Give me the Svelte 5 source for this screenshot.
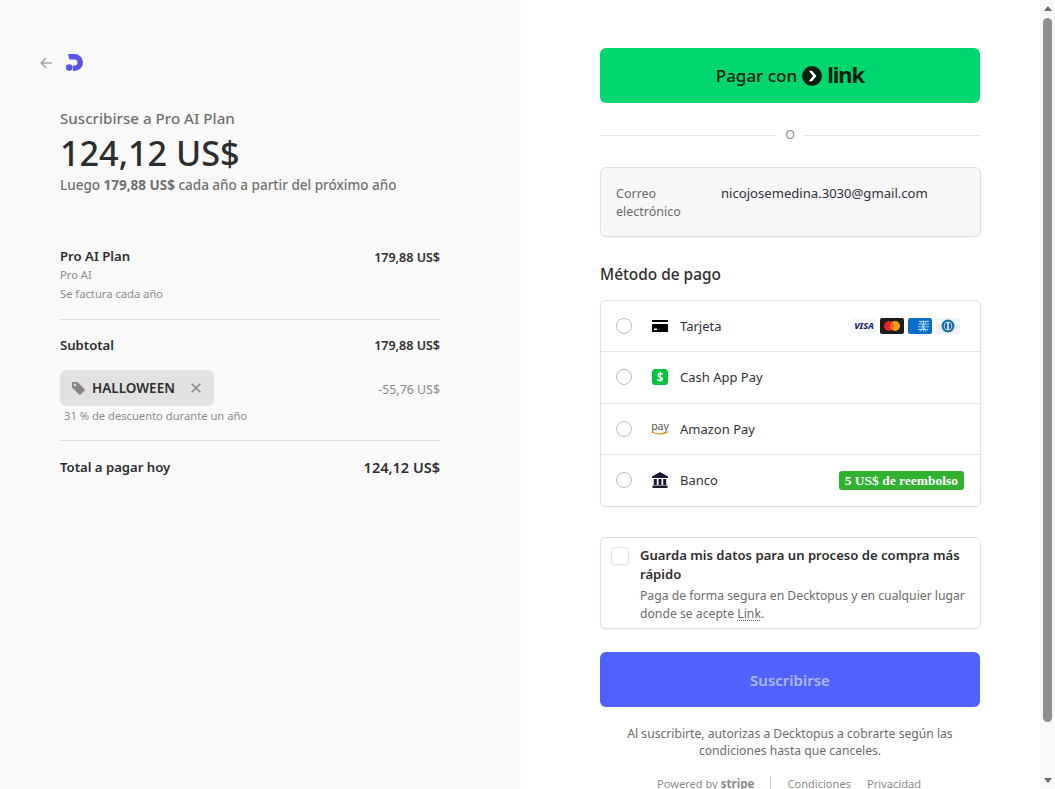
<script>
	const lines = [
		{ label: 'Tarjeta', icon: 'card' },
		{ label: 'Cash App Pay', icon: 'cash' },
		{ label: 'Amazon Pay', icon: 'amazon' },
		{ label: 'Banco', icon: 'bank' }
	];
</script>

<div class="page">
	<section class="summary">
		<div class="top">
			<svg class="back" width="12" height="12" viewBox="0 0 12 12" fill="none" stroke="#a3a3a3" stroke-width="1.5">
				<path d="M12 6H1.500M6 1.200 1.200 6 6 10.800" />
			</svg>
			<svg width="17" height="17" viewBox="0 0 17 17" fill="#5a55e8">
				<path d="M2 0h6.500a8.500 8.500 0 0 1 0 17H7v-5.500h1.500a3 3 0 0 0 0-6H3.400z" />
				<circle cx="3.300" cy="13.600" r="3.300" />
			</svg>
		</div>

		<div class="head">
			<div class="subtitle">Suscribirse a Pro AI Plan</div>
			<div class="price">124,12 US$</div>
			<div class="then">Luego <b>179,88 US$</b> cada año a partir del próximo año</div>
		</div>

		<div class="item">
			<div>
				<div class="strong name">Pro AI Plan</div>
				<div class="small">Pro AI</div>
				<div class="small">Se factura cada año</div>
			</div>
			<div class="amount">179,88 US$</div>
		</div>

		<div class="subtotal">
			<div class="row">
				<span class="strong">Subtotal</span>
				<span class="amount">179,88 US$</span>
			</div>
			<div class="row promo-row">
				<div class="promo">
					<svg width="13" height="13" viewBox="0 0 13 13" fill="#868686">
						<path d="M0 1.200C0 .5.500 0 1.200 0h4.300l7 7c.5.500.5 1.200 0 1.700l-3.800 3.800c-.5.500-1.200.5-1.700 0l-7-7zM3 4.300a1.300 1.300 0 1 0 0-2.600 1.300 1.300 0 0 0 0 2.600z" />
					</svg>
					<span>HALLOWEEN</span>
					<svg class="close" width="10" height="10" viewBox="0 0 10 10" stroke="#8a8a8a" stroke-width="1.600">
						<path d="M.7.7l8.600 8.600M9.300.7.700 9.300" />
					</svg>
				</div>
				<span class="discount">-55,76 US$</span>
			</div>
			<div class="small note">31 % de descuento durante un año</div>
		</div>

		<div class="row total">
			<span class="strong">Total a pagar hoy</span>
			<span class="total-amount">124,12 US$</span>
		</div>
	</section>

	<section class="checkout">
		<button class="link-btn">
			<span>Pagar con</span>
			<svg width="20" height="20" viewBox="0 0 20 20">
				<circle cx="10" cy="10" r="10" fill="#011e0f" />
				<path d="M6.800 4.800h3.200L14.500 10 10 15.200H6.800L11 10z" fill="#fff" />
			</svg>
			<span class="link-word">link</span>
		</button>

		<div class="or"><span>O</span></div>

		<div class="email">
			<div class="email-label">Correo electrónico</div>
			<div class="email-value">nicojosemedina.3030@gmail.com</div>
		</div>

		<h2>Método de pago</h2>

		<div class="methods">
			{#each lines as line}
				<div class="method">
					<span class="radio"></span>
					<span class="method-icon">
						{#if line.icon === 'card'}
							<svg width="16" height="12" viewBox="0 0 16 12">
								<rect width="16" height="2" fill="#000" />
								<path d="M0 4h16v8H0z" fill="#000" />
								<rect x="2" y="8.500" width="3" height="1.500" fill="#fff" />
							</svg>
						{:else if line.icon === 'cash'}
							<svg width="16" height="16" viewBox="0 0 16 16">
								<rect width="16" height="16" rx="3.500" fill="#00c43c" />
								<path d="M10.800 5.300C9.300 4 6 4.200 6 6.200 6 8.400 10.400 7.500 10.400 9.800 10.400 12 6.800 12 5.200 10.500M8.300 3v10" fill="none" stroke="#fff" stroke-width="1.500" />
							</svg>
						{:else if line.icon === 'amazon'}
							<span class="amazon">
								<span>pay</span>
								<svg width="18" height="4" viewBox="0 0 18 4">
									<path d="M.5.800C5 3.800 13 3.800 17.500.8" fill="none" stroke="#f39c26" stroke-width="1.200" />
								</svg>
							</span>
						{:else}
							<svg width="16" height="16" viewBox="0 0 16 16" fill="#1a1a35">
								<path d="M8 0l8 4.500V6H0V4.500z" />
								<path d="M1.800 7h3v6h-3zM6.500 7h3v6h-3zM11.200 7h3v6h-3zM.5 13.600h15V16H.5z" />
							</svg>
						{/if}
					</span>
					<span class="method-label">{line.label}</span>

					{#if line.icon === 'card'}
						<span class="brands">
							<span class="brand visa">VISA</span>
							<span class="brand mc">
								<svg width="24" height="16" viewBox="0 0 24 16">
									<rect width="24" height="16" rx="2" fill="#1c1c1c" />
									<circle cx="9" cy="8" r="5" fill="#e8202a" />
									<circle cx="15" cy="8" r="5" fill="#f79e1b" />
									<path d="M12 4a5 5 0 0 1 0 8 5 5 0 0 1 0-8z" fill="#f26a1f" />
								</svg>
							</span>
							<span class="brand amex">
								<svg width="24" height="16" viewBox="0 0 24 16">
									<rect width="24" height="16" rx="2" fill="#0a6fc9" />
									<path d="M11 3.500h10M10 6.200h11M10 8.800h11M10 11.500h10M12 2.500l6 11M19 2.500l-7 11M15.500 2.500v11" fill="none" stroke="#a9d0ef" stroke-width="1" />
								</svg>
							</span>
							<span class="brand diners">
								<svg width="24" height="16" viewBox="0 0 24 16">
									<rect width="24" height="16" rx="2" fill="#eef3f8" />
									<circle cx="12" cy="8" r="6.500" fill="#1a6ea8" />
									<circle cx="12" cy="8" r="4.200" fill="#fff" />
									<path d="M11.300 4.400a3.700 3.700 0 0 0 0 7.200zM12.700 4.400a3.700 3.700 0 0 1 0 7.200z" fill="#1a6ea8" />
								</svg>
							</span>
						</span>
					{:else if line.icon === 'bank'}
						<span class="cashback">5 US$ de reembolso</span>
					{/if}
				</div>
			{/each}
		</div>

		<div class="save">
			<span class="check"></span>
			<div>
				<div class="save-title">Guarda mis datos para un proceso de compra más rápido</div>
				<div class="save-text">Paga de forma segura en Decktopus y en cualquier lugar donde se acepte <span class="dotted">Link</span>.</div>
			</div>
		</div>

		<button class="pay-btn">Suscribirse</button>

		<p class="terms">Al suscribirte, autorizas a Decktopus a cobrarte según las condiciones hasta que canceles.</p>

		<div class="foot">
			<span>Powered by <b>stripe</b></span>
			<span class="sep"></span>
			<span class="foot-links"><span>Condiciones</span><span>Privacidad</span></span>
		</div>
	</section>

	<div class="scrollbar">
		<span class="arrow up"></span>
		<span class="thumb"></span>
		<span class="arrow down"></span>
	</div>
</div>

<style>
	:global(body) {
		margin: 0;
		font-family: "Noto Sans", "Open Sans", Arial, sans-serif;
		color: #1a1a1a;
		background: #fff;
		overflow: hidden;
	}
	* {
		box-sizing: border-box;
	}
	.page {
		position: relative;
		display: flex;
		height: 789px;
		overflow: hidden;
	}
	.summary {
		width: 520px;
		flex: none;
		background: #f9f9f9;
		padding: 54px 80px 0 60px;
		box-shadow: 4px 0 12px rgba(0, 0, 0, 0.02);
	}
	.top {
		display: flex;
		align-items: center;
		gap: 14px;
		margin-left: -20px;
	}
	.head {
		margin-top: 37px;
	}
	.subtitle {
		font-size: 15.150px;
		line-height: 20px;
		font-weight: 500;
		color: #707070;
	}
	.price {
		font-size: 34.200px;
		line-height: 48px;
		font-weight: 500;
		color: #2d2d2d;
		margin-top: 1px;
	}
	.then {
		font-size: 13.500px;
		line-height: 18px;
		font-weight: 500;
		color: #707070;
		margin-top: -1px;
	}
	.then b {
		font-weight: 700;
	}
	.item {
		display: flex;
		justify-content: space-between;
		margin-top: 54px;
		padding-bottom: 16px;
		border-bottom: 1px solid #e0e0e0;
	}
	.strong {
		font-size: 13.150px;
		line-height: 19px;
		font-weight: 600;
		color: #2d2d2d;
	}
	.name {
		line-height: 17px;
	}
	.small {
		font-size: 11.200px;
		line-height: 19px;
		color: #8c8c8c;
	}
	.amount {
		font-size: 12.500px;
		line-height: 19px;
		font-weight: 600;
		color: #2d2d2d;
	}
	.row {
		display: flex;
		justify-content: space-between;
		align-items: center;
	}
	.subtotal {
		padding: 16px 0 15px;
		border-bottom: 1px solid #e0e0e0;
	}
	.promo-row {
		margin-top: 15px;
	}
	.promo {
		display: flex;
		align-items: center;
		height: 36px;
		width: 154px;
		padding-left: 12px;
		border-radius: 6px;
		background: #e2e2e2;
		font-size: 13.500px;
		font-weight: 600;
		color: #2d2d2d;
		gap: 7px;
	}
	.close {
		margin-left: 9px;
	}
	.discount {
		font-size: 12.400px;
		color: #8c8c8c;
		margin-top: 2px;
	}
	.note {
		margin: 0 0 0 4px;
	}
	.total {
		margin-top: 16px;
	}
	.total-amount {
		font-size: 14.500px;
		font-weight: 600;
		color: #2d2d2d;
	}
	.checkout {
		width: 380px;
		margin: 48px 0 0 80px;
		flex: none;
	}
	button {
		display: flex;
		align-items: center;
		justify-content: center;
		width: 100%;
		height: 55px;
		border: 0;
		border-radius: 6px;
		font-family: inherit;
	}
	.link-btn {
		background: #00d66f;
		color: #011e0f;
		font-size: 17px;
		font-weight: 500;
		gap: 5px;
	}
	.link-word {
		font-size: 22px;
		line-height: 26px;
		font-weight: 700;
		letter-spacing: -1px;
		margin-top: -3px;
	}
	.or {
		display: flex;
		align-items: center;
		gap: 9px;
		margin-top: 23px;
		font-size: 12.500px;
		line-height: 18px;
		color: #8c8c8c;
	}
	.or::before,
	.or::after {
		content: '';
		flex: 1;
		height: 1px;
		background: #e6e6e6;
	}
	.email {
		display: flex;
		width: 381px;
		height: 70px;
		margin-top: 23px;
		padding: 17px 15px;
		background: #f7f7f7;
		border: 1px solid #e0e0e0;
		border-radius: 6px;
		box-shadow: 0 1px 2px rgba(0, 0, 0, 0.05);
		font-size: 13.100px;
		line-height: 18px;
	}
	.email-label {
		width: 105px;
		flex: none;
		font-size: 12.500px;
		color: #6b6b6b;
	}
	.email-value {
		color: #30313d;
		margin-top: -1px;
	}
	h2 {
		margin: 28px 0 0;
		font-size: 15.400px;
		line-height: 20px;
		font-weight: 500;
		color: #2d2d2d;
	}
	.methods {
		width: 381px;
		margin-top: 15px;
		border: 1px solid #e0e0e0;
		border-radius: 6px;
		box-shadow: 0 1px 2px rgba(0, 0, 0, 0.05);
	}
	.method {
		display: flex;
		align-items: center;
		height: 51.250px;
		padding: 0 16px 0 15px;
		border-bottom: 1px solid #e6e6e6;
		font-size: 13px;
	}
	.method:last-child {
		border-bottom: 0;
	}
	.radio {
		width: 16px;
		height: 16px;
		flex: none;
		border-radius: 50%;
		border: 1px solid #bdbdbd;
	}
	.method-icon {
		display: flex;
		justify-content: center;
		align-items: center;
		width: 18px;
		margin: 0 11px 0 19px;
		flex: none;
	}
	.method-label {
		color: #30313d;
	}
	.amazon {
		display: flex;
		flex-direction: column;
		align-items: center;
		font-size: 10.500px;
		line-height: 9px;
		color: #555;
	}
	.brands {
		display: flex;
		gap: 4px;
		margin-left: auto;
		margin-right: 4px;
	}
	.brand {
		display: block;
		width: 24px;
		height: 16px;
	}
	.brand svg {
		display: block;
	}
	.visa {
		font-size: 9px;
		line-height: 16px;
		font-weight: 800;
		font-style: italic;
		color: #1a2a7a;
		text-align: center;
		background: #f6f8fb;
		border-radius: 2px;
	}
	.cashback {
		margin-left: auto;
		height: 19px;
		padding: 0 6px;
		border-radius: 3px;
		background: #30b130;
		color: #fff;
		font-family: "Liberation Serif", serif;
		font-size: 13.500px;
		line-height: 19px;
		font-weight: 700;
	}
	.save {
		display: flex;
		gap: 11px;
		width: 381px;
		height: 92px;
		margin-top: 30px;
		padding: 9px 10px;
		border: 1px solid #e0e0e0;
		border-radius: 6px;
		box-shadow: 0 1px 2px rgba(0, 0, 0, 0.05);
	}
	.check {
		width: 18px;
		height: 18px;
		flex: none;
		border: 1px solid #e0e0e0;
		border-radius: 4px;
		box-shadow: 0 1px 2px rgba(0, 0, 0, 0.06);
	}
	.save-title {
		font-size: 13.100px;
		line-height: 19px;
		font-weight: 600;
		color: #2d2d2d;
		margin-top: -1px;
	}
	.save-text {
		font-size: 12.200px;
		line-height: 18px;
		color: #6b6b6b;
		margin-top: 3px;
	}
	.dotted {
		text-decoration: underline dotted;
		text-underline-offset: 2px;
	}
	.pay-btn {
		margin-top: 23px;
		background: #4f62fb;
		color: rgba(255, 255, 255, 0.55);
		font-size: 15px;
		font-weight: 600;
	}
	.terms {
		margin: 18px 0 0;
		padding: 0 20px;
		font-size: 12.150px;
		line-height: 17px;
		color: #6b6b6b;
		text-align: center;
	}
	.foot {
		display: flex;
		align-items: center;
		margin-top: 17px;
		padding-left: 57px;
		font-size: 11.100px;
		line-height: 16px;
		color: #8c8c8c;
	}
	.foot b {
		font-weight: 700;
		font-size: 11.600px;
	}
	.sep {
		width: 1px;
		height: 16px;
		margin: 0 16px;
		background: #d8d8d8;
	}
	.foot-links {
		display: flex;
		gap: 16px;
	}
	.scrollbar {
		position: absolute;
		top: 0;
		right: 0;
		bottom: 0;
		width: 15px;
		background: #f8f8f8;
		display: flex;
		flex-direction: column;
		align-items: center;
	}
	.thumb {
		width: 9px;
		height: 704px;
		margin-top: 7px;
		margin-bottom: auto;
		border-radius: 5px;
		background: #8f8f8f;
	}
	.arrow {
		width: 0;
		height: 0;
		border-left: 4px solid transparent;
		border-right: 4px solid transparent;
	}
	.up {
		margin-top: 6px;
		border-bottom: 5px solid #6a6a6a;
	}
	.down {
		margin-bottom: 6px;
		border-top: 5px solid #6a6a6a;
	}
</style>
